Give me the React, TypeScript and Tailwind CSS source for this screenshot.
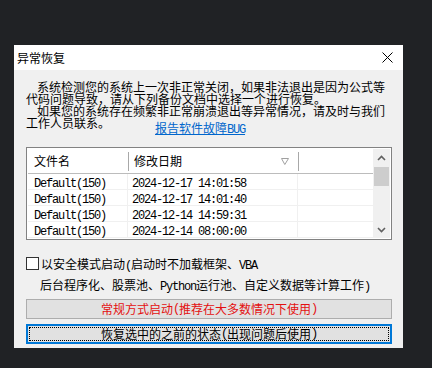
import React from 'react';

const cjk = "font-['Noto_Sans_CJK_SC',sans-serif]";

// half-width latin runs render like the Song face's 6px ASCII cells
const M = ({ children }: { children: React.ReactNode }) => (
  <span className="font-['Liberation_Mono',monospace] tracking-[-1.2px]">{children}</span>
);

const rows = [
  { name: 'Default(150)', date: '2024-12-17 14:01:58' },
  { name: 'Default(150)', date: '2024-12-17 14:01:40' },
  { name: 'Default(150)', date: '2024-12-14 14:59:31' },
  { name: 'Default(150)', date: '2024-12-14 08:00:00' },
];

const Chevron = ({ down }: { down?: boolean }) => (
  <svg width="9" height="6" viewBox="0 0 9 6" className={down ? 'rotate-180' : ''}>
    <path d="M1 5 L4.5 1.5 L8 5" fill="none" stroke="#606060" strokeWidth="1.6" />
  </svg>
);

export default function App() {
  return (
    <div className={`w-[432px] h-[368px] bg-[#202225] pt-[45px] pl-[14px] text-[12px] text-black ${cjk}`}>
      <div className="w-[389px] h-[303px] bg-[#f0f0f0] flex flex-col">
        {/* Title bar */}
        <div className="h-[25px] bg-white flex items-center justify-between pl-[3px] pr-[10px]">
          <span className="leading-[12px]">异常恢复</span>
          <svg width="11" height="11" viewBox="0 0 11 11">
            <path d="M0.5 0.5 L10.5 10.5 M10.5 0.5 L0.5 10.5" stroke="#000" strokeWidth="1" />
          </svg>
        </div>

        <div className="px-[12px] pt-[11px] flex flex-col">
          {/* Message */}
          <div className="leading-[12px] whitespace-nowrap">
            <div className="pl-[11px]">系统检测您的系统上一次非正常关闭，如果非法退出是因为公式等</div>
            <div>代码问题导致，请从下列备份文档中选择一个进行恢复。</div>
            <div className="pl-[11px]">如果您的系统存在频繁非正常崩溃退出等异常情况，请及时与我们</div>
            <div className="flex items-start">
              <span>工作人员联系。</span>
              <a className="ml-[45px] mt-[5px] text-[#0066cc] underline leading-[12px]">
                报告软件故障<M>BUG</M>
              </a>
            </div>
          </div>

          {/* List */}
          <div className="mt-[11px] w-[366px] h-[93px] border border-[#828282] bg-white p-[1px] flex">
            <div className="flex-1 flex flex-col">
              <div className="h-[25px] border-b border-[#bcbcbc] flex items-center">
                <div className="w-[100px] pl-[6px] leading-[12px]">文件名</div>
                <div className="w-[1px] h-[19px] bg-[#a8a8a8]" />
                <div className="w-[169px] pl-[5px] pr-[9px] flex items-center justify-between leading-[12px]">
                  <span>修改日期</span>
                  <svg width="8" height="7" viewBox="0 0 8 7">
                    <path d="M0.5 0.5 H7.5 L3.8 6.5 Z" fill="none" stroke="#a0a0a0" strokeWidth="1" />
                  </svg>
                </div>
                <div className="w-[1px] h-[19px] bg-[#a8a8a8]" />
                <div className="flex-1" />
              </div>
              {rows.map((r, i) => (
                <div key={i} className="h-[16px] border-b border-[#f0f0f0] flex items-center leading-[15px]">
                  <div className="w-[100px] h-full pl-[6px] border-r border-[#f0f0f0]">
                    <M>{r.name}</M>
                  </div>
                  <div className="w-[170px] h-full pl-[4px] border-r border-[#f0f0f0]">
                    <M>{r.date}</M>
                  </div>
                  <div className="flex-1" />
                </div>
              ))}
            </div>
            {/* Scrollbar */}
            <div className="w-[17px] bg-[#f0f0f0] flex flex-col">
              <div className="h-[18px] flex items-center justify-center">
                <Chevron />
              </div>
              <div className="mx-[1px] h-[19px] bg-[#cdcdcd]" />
              <div className="flex-1" />
              <div className="h-[17px] flex items-center justify-center">
                <Chevron down />
              </div>
            </div>
          </div>

          {/* Safe mode */}
          <div className="mt-[17px] flex items-start whitespace-nowrap">
            <div className="w-[13px] h-[13px] border border-[#333] bg-white" />
            <div className="ml-[2px] leading-[13px]">
              以安全模式启动<M>(</M>启动时不加载框架、<M>VBA</M>
            </div>
          </div>
          <div className="mt-[6px] pl-[14px] leading-[12px] whitespace-nowrap">
            后台程序化、股票池、<M>Python</M>运行池、自定义数据等计算工作<M>)</M>
          </div>

          {/* Buttons */}
          <button className="mt-[6px] w-[366px] h-[20px] border border-[#adadad] bg-[#e1e1e1] text-[#e41010] leading-[12px] flex items-center justify-center">
            常规方式启动<M>(</M>推荐在大多数情况下使用<M>)</M>
          </button>
          <button className="mt-[5px] w-[366px] h-[20px] border-2 border-[#0078d7] bg-[#e1e1e1] p-[1px]">
            <div className="w-full h-full border border-dotted border-black flex items-center justify-center leading-[12px]">
              恢复选中的之前的状态<M>(</M>出现问题后使用<M>)</M>
            </div>
          </button>
        </div>
      </div>
    </div>
  );
}
